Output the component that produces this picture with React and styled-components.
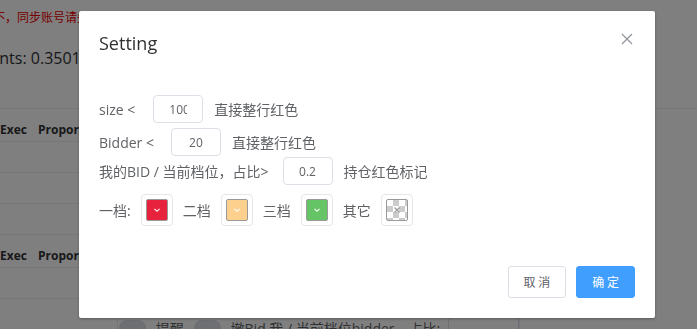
import React from "react";
import styled, { createGlobalStyle } from "styled-components";

const GlobalStyle = createGlobalStyle`
  html, body {
    margin: 0;
    padding: 0;
    background: #fff;
    overflow: hidden;
  }
  body {
    font-family: "Open Sans", "Noto Sans CJK SC", sans-serif;
  }
`;

const Page = styled.div`
  width: 697px;
  height: 329px;
  overflow: hidden;
`;

const Warn = styled.div`
  margin: 10px 0 0 -7px;
  font-size: 12px;
  line-height: 16px;
  color: #e00;
  white-space: nowrap;
`;

const Points = styled.div`
  margin: 21px 0 0 -24px;
  font-size: 16px;
  line-height: 22px;
  color: #303133;
  white-space: nowrap;
`;

const Section = styled.div`
  margin-top: 39px;
  border-top: 1px solid #ebeef5;
`;

const Table = styled.div`
  width: 600px;
`;

const HeadRow = styled.div`
  display: flex;
  height: 33px;
  padding-top: 13px;
  box-sizing: border-box;
  border-bottom: 1px solid #ebeef5;
  font-size: 12px;
  line-height: 16px;
  font-weight: 700;
  color: #303133;
`;

const HeadCell = styled.div`
  width: ${(p) => p.w}px;
  white-space: nowrap;
`;

const BodyRow = styled.div`
  height: 30px;
  border-bottom: 1px solid #ebeef5;
`;

const Panel = styled.div`
  margin: 17px 0 0 117px;
  width: 401px;
  height: 40px;
  border-left: 1px solid #ebeef5;
  border-right: 1px solid #ebeef5;
  display: flex;
  align-items: flex-start;
  padding-top: 3px;
  font-size: 14px;
  line-height: 20px;
  color: #606266;
`;

const Switch = styled.span`
  width: 30px;
  height: 16px;
  border-radius: 8px;
  background: #dcdfe6;
  margin: 1px 10px 0 1px;
`;

const PanelText = styled.span`
  margin-right: ${(p) => p.mr || 10}px;
  white-space: nowrap;
`;

const PanelInput = styled.span`
  width: 77px;
  height: 28px;
  margin-top: -2px;
  border: 1px solid #dcdfe6;
  border-radius: 4px;
`;

const Overlay = styled.div`
  position: fixed;
  inset: 0;
  background: rgba(0, 0, 0, 0.5);
`;

const DialogWrap = styled.div`
  position: fixed;
  inset: 0;
  padding: 11px 0 0 79px;
`;

const Dialog = styled.div`
  width: 576px;
  background: #fff;
  border-radius: 2px;
  box-shadow: 0 1px 3px rgba(0, 0, 0, 0.3);
  position: relative;
`;

const Header = styled.div`
  padding: 20px 20px 10px;
`;

const Title = styled.span`
  font-size: 18px;
  line-height: 24px;
  color: #303133;
`;

const Close = styled.button`
  position: absolute;
  top: 20px;
  right: 20px;
  width: 16px;
  height: 16px;
  padding: 0;
  border: 0;
  background: none;
  display: flex;
  align-items: center;
  justify-content: center;
`;

const Body = styled.div`
  padding: 30px 20px;
  font-size: 14px;
  color: #606266;
`;

const Row = styled.div`
  display: flex;
  align-items: center;
  margin-bottom: ${(p) => p.mb || 0}px;
  white-space: nowrap;
`;

const NumInput = styled.input`
  width: 50px;
  height: 28px;
  box-sizing: border-box;
  margin: 0 11px 0 ${(p) => p.lead}px;
  padding: 0 15px;
  border: 1px solid #dcdfe6;
  border-radius: 4px;
  text-align: center;
  font-family: "Open Sans", sans-serif;
  font-size: 12px;
  color: #606266;
  outline: none;
`;

const Picker = styled.span`
  width: 32px;
  height: 32px;
  box-sizing: border-box;
  margin: 0 10px;
  padding: 4px;
  border: 1px solid #e6e6e6;
  border-radius: 4px;
  display: flex;
`;

const Swatch = styled.span`
  flex: 1;
  border: 1px solid #999;
  border-radius: 2px;
  display: flex;
  align-items: center;
  justify-content: center;
  background: ${(p) =>
    p.color ||
    "repeating-conic-gradient(#ccc 0% 25%, #fff 0% 50%) 0 0 / 12px 12px"};
`;

const Footer = styled.div`
  padding: 10px 20px 20px;
  display: flex;
  justify-content: flex-end;
  gap: 10px;
`;

const Button = styled.button`
  padding: 9px 15px;
  font-family: "Noto Sans CJK SC", sans-serif;
  font-size: 12px;
  line-height: 12px;
  border-radius: 3px;
  border: 1px solid ${(p) => (p.primary ? "#409eff" : "#dcdfe6")};
  background: ${(p) => (p.primary ? "#409eff" : "#fff")};
  color: ${(p) => (p.primary ? "#fff" : "#606266")};
  white-space: pre;
`;

const Chevron = () => (
  <svg width="10" height="10" viewBox="0 0 10 10">
    <polyline points="2.5,3.8 5,6.3 7.5,3.8" fill="none" stroke="#fff" strokeWidth="1.1" />
  </svg>
);

const EmptyMark = () => (
  <svg width="10" height="10" viewBox="0 0 10 10">
    <path d="M2.5 2.5 L7.5 7.5 M7.5 2.5 L2.5 7.5" stroke="#999" strokeWidth="1.1" />
  </svg>
);

const levels = [
  { label: "一档:", color: "#e6223d" },
  { label: "二档", color: "#fdd08e" },
  { label: "三档", color: "#65c466" },
  { label: "其它", color: null },
];

const TableBlock = ({ rows }) => (
  <Table>
    <HeadRow>
      <HeadCell w={38}>Exec</HeadCell>
      <HeadCell w={80}>Proportion</HeadCell>
    </HeadRow>
    {Array.from({ length: rows }).map((_, i) => (
      <BodyRow key={i} />
    ))}
  </Table>
);

export default function App() {
  return (
    <>
      <GlobalStyle />
      <Page>
        <Warn>不，同步账号请先登录后再操作</Warn>
        <Points>Points: 0.350123</Points>
        <Section>
          <TableBlock rows={3} />
          <TableBlock rows={1} />
        </Section>
        <Panel>
          <Switch />
          <PanelText mr={9}>提醒</PanelText>
          <Switch />
          <PanelText mr={8}>撤Bid 我 / 当前档位bidder　占比:</PanelText>
          <PanelInput />
        </Panel>
      </Page>
      <Overlay />
      <DialogWrap>
        <Dialog>
          <Header>
            <Title>Setting</Title>
          </Header>
          <Close aria-label="close">
            <svg width="12" height="12" viewBox="0 0 12 12">
              <path d="M1 1 L11 11 M11 1 L1 11" stroke="#909399" strokeWidth="1.2" />
            </svg>
          </Close>
          <Body>
            <Row mb={5}>
              size &lt;
              <NumInput lead={18} defaultValue="100" />
              直接整行红色
            </Row>
            <Row mb={1}>
              Bidder &lt;
              <NumInput lead={17} defaultValue="20" />
              直接整行红色
            </Row>
            <Row mb={9}>
              我的BID / 当前档位，占比&gt;
              <NumInput lead={14} defaultValue="0.2" />
              持仓红色标记
            </Row>
            <Row>
              {levels.map((l) => (
                <React.Fragment key={l.label}>
                  {l.label}
                  <Picker>
                    <Swatch color={l.color}>
                      {l.color ? <Chevron /> : <EmptyMark />}
                    </Swatch>
                  </Picker>
                </React.Fragment>
              ))}
            </Row>
          </Body>
          <Footer>
            <Button>取 消</Button>
            <Button primary>确 定</Button>
          </Footer>
        </Dialog>
      </DialogWrap>
    </>
  );
}
